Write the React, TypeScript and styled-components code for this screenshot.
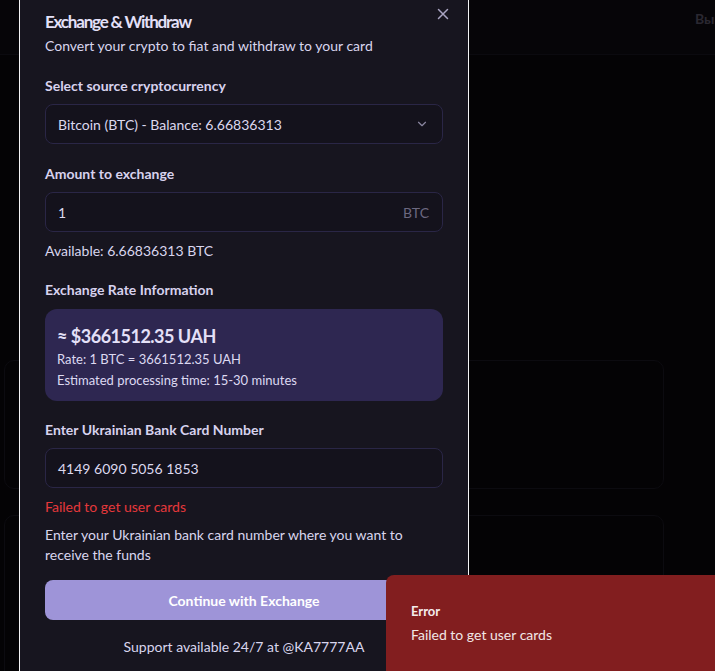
import React from "react";
import styled, { createGlobalStyle } from "styled-components";

const FONT = `Lato, "Noto Sans", "Liberation Sans", sans-serif`;

const Global = createGlobalStyle`
  html, body { margin: 0; padding: 0; background: #040305; }
  body { font-family: ${FONT}; width: 715px; height: 671px; overflow: hidden; }
  * { box-sizing: border-box; }
`;

const Page = styled.div`
  position: relative;
  width: 715px;
  height: 671px;
  background: #040305;
  overflow: hidden;
`;

const Header = styled.header`
  height: 55px;
  border-bottom: 1px solid #0b0a0f;
  background: #060508;
  display: flex;
  justify-content: flex-end;
  align-items: center;
`;

const HeaderLink = styled.span`
  font-size: 14px;
  font-weight: 700;
  color: #2a2831;
  margin-right: -23px;
  margin-top: -18px;
`;

const Content = styled.main`
  display: flex;
  flex-direction: column;
  gap: 26px;
  padding: 305px 51px 0 0;
  align-items: flex-end;
`;

const BgCard = styled.div<{ h: number }>`
  width: 660px;
  height: ${(p) => p.h}px;
  border: 1px solid #0c0b10;
  border-radius: 10px;
  background: #040305;
`;

const Dialog = styled.div`
  position: absolute;
  left: 19px;
  top: -20px;
  width: 450px;
  background: #17151f;
  border-left: 1px solid #f4f4f6;
  border-right: 1px solid #f4f4f6;
  padding: 30px 25px 24px 25px;
  display: flex;
  flex-direction: column;
`;

const Close = styled.button`
  position: absolute;
  right: 18px;
  top: 27px;
  background: none;
  border: none;
  padding: 0;
  width: 14px;
  height: 14px;
  display: flex;
  align-items: center;
  justify-content: center;
  color: #a9a4c2;
`;

const Title = styled.h2`
  margin: 0;
  font-size: 17px;
  letter-spacing: -1.2px;
  line-height: 24px;
  font-weight: 700;
  color: #e4e0f8;
`;

const Subtitle = styled.p`
  margin: 2px 0 0 0;
  font-size: 14px;
  line-height: 20px;
  color: #d9d5ee;
`;

const Section = styled.div<{ mt: number }>`
  margin-top: ${(p) => p.mt}px;
  display: flex;
  flex-direction: column;
`;

const Label = styled.div`
  font-size: 14px;
  line-height: 20px;
  font-weight: 700;
  color: #d7d2ee;
  margin-bottom: 8px;
`;

const Field = styled.div`
  height: 40px;
  border: 1px solid #2a2646;
  border-radius: 8px;
  background: #14121c;
  display: flex;
  align-items: center;
  justify-content: space-between;
  padding: 0 13px 0 12px;
  font-size: 14px;
  color: #dcd8ee;
`;

const Suffix = styled.span`
  color: #6c6880;
  font-size: 14px;
`;

const Hint = styled.div<{ color?: string; mt?: number }>`
  margin-top: ${(p) => p.mt ?? 9}px;
  font-size: 14px;
  line-height: 20px;
  color: ${(p) => p.color ?? "#d9d5ee"};
`;

const RateBox = styled.div`
  margin-top: 1px;
  background: #2e2751;
  border-radius: 12px;
  padding: 14px 12px 12px 12px;
  height: 92px;
  display: flex;
  flex-direction: column;
`;

const RateBig = styled.div`
  font-size: 18px;
  letter-spacing: -0.5px;
  line-height: 26px;
  font-weight: 700;
  color: #e4e0f8;
`;

const RateLine = styled.div`
  font-size: 13px;
  line-height: 21px;
  color: #ddd9f1;
`;

const PrimaryButton = styled.button`
  margin-top: 15px;
  height: 40px;
  border: none;
  border-radius: 8px;
  background: #9e94d8;
  color: #ffffff;
  font-family: ${FONT};
  font-size: 14px;
  font-weight: 700;
`;

const Support = styled.div`
  margin-top: 17px;
  text-align: center;
  font-size: 14px;
  line-height: 20px;
  color: #d9d5ee;
`;

const Toast = styled.div`
  position: absolute;
  left: 386px;
  top: 575px;
  width: 360px;
  height: 120px;
  background: #821e1f;
  border-radius: 8px;
  padding: 26px 25px;
  display: flex;
  flex-direction: column;
  gap: 4px;
`;

const ToastTitle = styled.div`
  font-size: 13px;
  line-height: 20px;
  font-weight: 700;
  color: #f4ecec;
`;

const ToastText = styled.div`
  font-size: 14px;
  line-height: 20px;
  color: #f1e6e6;
`;

export default function App() {
  return (
    <Page>
      <Global />
      <Header>
        <HeaderLink>Выйти</HeaderLink>
      </Header>
      <Content>
        <BgCard h={129} />
        <BgCard h={200} />
      </Content>

      <Dialog>
        <Close aria-label="close">
          <svg width="12" height="12" viewBox="0 0 12 12" fill="none" stroke="currentColor" strokeWidth="1.5" strokeLinecap="round">
            <path d="M1.5 1.5 L10.5 10.5 M10.5 1.5 L1.5 10.5" />
          </svg>
        </Close>
        <Title>Exchange &amp; Withdraw</Title>
        <Subtitle>Convert your crypto to fiat and withdraw to your card</Subtitle>

        <Section mt={20}>
          <Label>Select source cryptocurrency</Label>
          <Field>
            <span>Bitcoin (BTC) - Balance: 6.66836313</span>
            <svg width="14" height="14" viewBox="0 0 24 24" fill="none" stroke="#8a86a0" strokeWidth="2" strokeLinecap="round" strokeLinejoin="round">
              <path d="M6 9l6 6 6-6" />
            </svg>
          </Field>
        </Section>

        <Section mt={20}>
          <Label>Amount to exchange</Label>
          <Field>
            <span>1</span>
            <Suffix>BTC</Suffix>
          </Field>
          <Hint>Available: 6.66836313 BTC</Hint>
        </Section>

        <Section mt={19}>
          <Label>Exchange Rate Information</Label>
          <RateBox>
            <RateBig>≈ $3661512.35 UAH</RateBig>
            <RateLine>Rate: 1 BTC = 3661512.35 UAH</RateLine>
            <RateLine>Estimated processing time: 15-30 minutes</RateLine>
          </RateBox>
        </Section>

        <Section mt={19}>
          <Label>Enter Ukrainian Bank Card Number</Label>
          <Field>
            <span>4149 6090 5056 1853</span>
          </Field>
          <Hint color="#e5383b" mt={9}>Failed to get user cards</Hint>
          <Hint mt={8}>Enter your Ukrainian bank card number where you want to receive the funds</Hint>
        </Section>

        <PrimaryButton>Continue with Exchange</PrimaryButton>
        <Support>Support available 24/7 at @KA7777AA</Support>
      </Dialog>

      <Toast>
        <ToastTitle>Error</ToastTitle>
        <ToastText>Failed to get user cards</ToastText>
      </Toast>
    </Page>
  );
}
